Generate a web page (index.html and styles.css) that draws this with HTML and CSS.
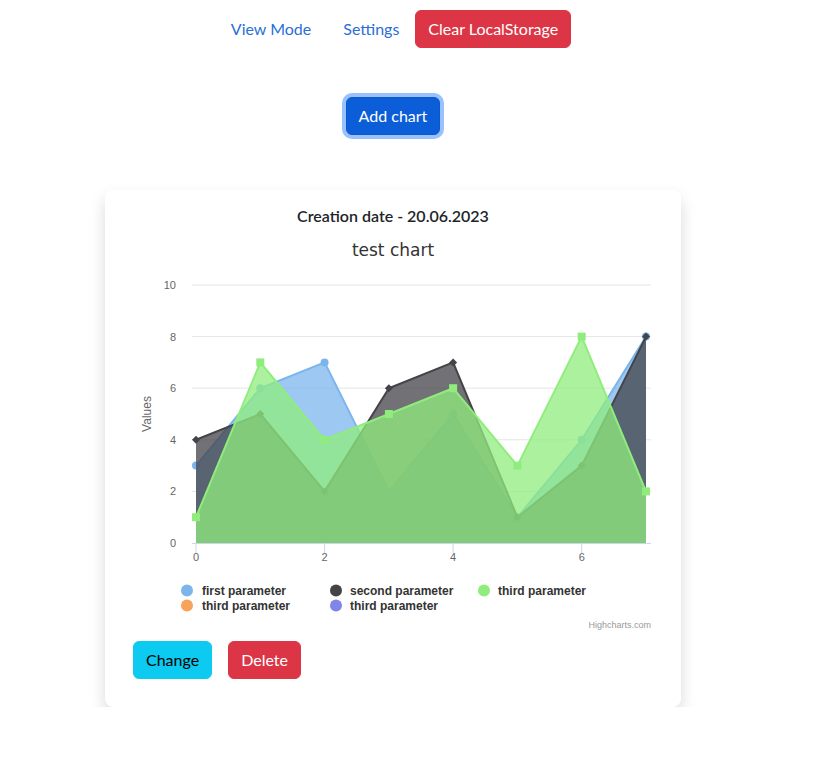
FILE: index.html
```html
<!DOCTYPE html>
<html lang="en">
<head>
    <meta charset="UTF-8">
    <meta name="viewport" content="width=device-width, initial-scale=1.0">
    <title>Charts</title>
    <link rel="stylesheet" href="styles.css">
</head>
<body>
    <div class="page">
        <nav class="top-nav">
            <a href="#" class="nav-link">View Mode</a>
            <a href="#" class="nav-link">Settings</a>
            <button class="btn btn-danger">Clear LocalStorage</button>
        </nav>

        <div class="add-row">
            <button class="btn btn-primary is-focused">Add chart</button>
        </div>

        <div class="chart-card">
            <h5 class="card-title">Creation date - 20.06.2023</h5>

            <svg class="chart" width="536" height="400" viewBox="125 230 536 400">
                <text class="chart-title" x="393" y="256">test chart</text>

                <!-- grid -->
                <g class="grid">
                    <line x1="192" y1="285" x2="651" y2="285"/>
                    <line x1="192" y1="336.6" x2="651" y2="336.6"/>
                    <line x1="192" y1="388.2" x2="651" y2="388.2"/>
                    <line x1="192" y1="439.8" x2="651" y2="439.8"/>
                    <line x1="192" y1="491.4" x2="651" y2="491.4"/>
                </g>
                <g class="y-labels">
                    <text x="176" y="289">10</text>
                    <text x="176" y="340.6">8</text>
                    <text x="176" y="392.2">6</text>
                    <text x="176" y="443.8">4</text>
                    <text x="176" y="495.4">2</text>
                    <text x="176" y="547">0</text>
                </g>
                <text class="axis-title" transform="translate(151 414) rotate(-90)">Values</text>

                <!-- first parameter -->
                <g class="series">
                    <polygon fill="#7cb5ec" points="196,543 196,465.6 260.3,388.2 324.6,362.4 388.9,491.4 453.1,414 517.4,517.2 581.7,439.8 646,336.6 646,543"/>
                    <polyline stroke="#7cb5ec" points="196,465.6 260.3,388.2 324.6,362.4 388.9,491.4 453.1,414 517.4,517.2 581.7,439.8 646,336.6"/>
                    <g fill="#7cb5ec">
                        <circle cx="196" cy="465.6" r="4"/>
                        <circle cx="260.3" cy="388.2" r="4"/>
                        <circle cx="324.6" cy="362.4" r="4"/>
                        <circle cx="388.9" cy="491.4" r="4"/>
                        <circle cx="453.1" cy="414" r="4"/>
                        <circle cx="517.4" cy="517.2" r="4"/>
                        <circle cx="581.7" cy="439.8" r="4"/>
                        <circle cx="646" cy="336.6" r="4"/>
                    </g>
                </g>

                <!-- second parameter -->
                <g class="series">
                    <polygon fill="#434348" points="196,543 196,439.8 260.3,414 324.6,491.4 388.9,388.2 453.1,362.4 517.4,517.2 581.7,465.6 646,336.6 646,543"/>
                    <polyline stroke="#434348" points="196,439.8 260.3,414 324.6,491.4 388.9,388.2 453.1,362.4 517.4,517.2 581.7,465.6 646,336.6"/>
                    <g fill="#434348">
                        <polygon points="196,435.8 200,439.8 196,443.8 192,439.8"/>
                        <polygon points="260.3,410 264.3,414 260.3,418 256.3,414"/>
                        <polygon points="324.6,487.4 328.6,491.4 324.6,495.4 320.6,491.4"/>
                        <polygon points="388.9,384.2 392.9,388.2 388.9,392.2 384.9,388.2"/>
                        <polygon points="453.1,358.4 457.1,362.4 453.1,366.4 449.1,362.4"/>
                        <polygon points="517.4,513.2 521.4,517.2 517.4,521.2 513.4,517.2"/>
                        <polygon points="581.7,461.6 585.7,465.6 581.7,469.6 577.7,465.6"/>
                        <polygon points="646,332.6 650,336.6 646,340.6 642,336.6"/>
                    </g>
                </g>

                <!-- third parameter -->
                <g class="series">
                    <polygon fill="#90ed7d" points="196,543 196,517.2 260.3,362.4 324.6,439.8 388.9,414 453.1,388.2 517.4,465.6 581.7,336.6 646,491.4 646,543"/>
                    <polyline stroke="#90ed7d" points="196,517.2 260.3,362.4 324.6,439.8 388.9,414 453.1,388.2 517.4,465.6 581.7,336.6 646,491.4"/>
                    <g fill="#90ed7d">
                        <rect x="192" y="513.2" width="8" height="8"/>
                        <rect x="256.3" y="358.4" width="8" height="8"/>
                        <rect x="320.6" y="435.8" width="8" height="8"/>
                        <rect x="384.9" y="410" width="8" height="8"/>
                        <rect x="449.1" y="384.2" width="8" height="8"/>
                        <rect x="513.4" y="461.6" width="8" height="8"/>
                        <rect x="577.7" y="332.6" width="8" height="8"/>
                        <rect x="642" y="487.4" width="8" height="8"/>
                    </g>
                </g>

                <!-- x axis -->
                <g class="x-axis">
                    <line x1="192" y1="543.5" x2="651" y2="543.5"/>
                    <line x1="196" y1="543" x2="196" y2="553"/>
                    <line x1="324.6" y1="543" x2="324.6" y2="553"/>
                    <line x1="453.1" y1="543" x2="453.1" y2="553"/>
                    <line x1="581.7" y1="543" x2="581.7" y2="553"/>
                </g>
                <g class="x-labels">
                    <text x="196" y="561">0</text>
                    <text x="324.6" y="561">2</text>
                    <text x="453.1" y="561">4</text>
                    <text x="581.7" y="561">6</text>
                </g>

                <!-- legend -->
                <g class="legend">
                    <circle cx="187" cy="590.5" r="6" fill="#7cb5ec"/>
                    <text x="202" y="595">first parameter</text>
                    <circle cx="336" cy="590.5" r="6" fill="#434348"/>
                    <text x="350" y="595">second parameter</text>
                    <circle cx="484" cy="590.5" r="6" fill="#90ed7d"/>
                    <text x="498" y="595">third parameter</text>
                    <circle cx="187" cy="605.5" r="6" fill="#f7a35c"/>
                    <text x="202" y="610">third parameter</text>
                    <circle cx="336" cy="605.5" r="6" fill="#8085e9"/>
                    <text x="350" y="610">third parameter</text>
                </g>

                <text class="credits" x="651" y="628">Highcharts.com</text>
            </svg>

            <div class="card-actions">
                <button class="btn btn-info">Change</button>
                <button class="btn btn-danger">Delete</button>
            </div>
        </div>
    </div>
</body>
</html>
```

FILE: styles.css
```css
body {
    margin: 0;
    font-family: Lato, 'Liberation Sans', sans-serif;
    font-size: 16px;
    line-height: 1.5;
    color: #212529;
    background-color: #fff;
}

.page {
    width: 786px;
    display: flex;
    flex-direction: column;
    align-items: center;
}

.top-nav {
    display: flex;
    align-items: center;
    margin-top: 9px;
}

.nav-link {
    padding: 8px 16px;
    color: #2a6fd6;
    text-decoration: none;
}

.btn {
    font-family: inherit;
    font-size: 16px;
    line-height: 24px;
    padding: 6px 12px;
    border: 1px solid transparent;
    border-radius: 6px;
    cursor: pointer;
}

.btn-danger {
    background: #dc3545;
    border-color: #dc3545;
    color: #fff;
}

.btn-primary {
    background: #0b5ed7;
    border-color: #0a58ca;
    color: #fff;
}

.btn-info {
    background: #0dcaf0;
    border-color: #0dcaf0;
    color: #000;
}

.is-focused {
    box-shadow: 0 0 0 4px rgba(49, 132, 253, 0.5);
}

.add-row {
    margin-top: 48px;
}

.chart-card {
    width: 576px;
    box-sizing: border-box;
    margin-top: 55px;
    padding: 14px 20px 28px;
    background: #fff;
    border-radius: 8px;
    box-shadow: 0 8px 16px rgba(0, 0, 0, 0.15);
}

.card-title {
    margin: 0;
    font-size: 16px;
    font-weight: 600;
    line-height: 24px;
    text-align: center;
}

.chart {
    display: block;
    margin-top: 2px;
}

.chart-title {
    font-family: 'DejaVu Sans', sans-serif;
    font-size: 17px;
    fill: #333;
    text-anchor: middle;
}

.grid line {
    stroke: #e6e6e6;
    stroke-width: 1;
}

.y-labels text {
    font-family: 'Liberation Sans', sans-serif;
    font-size: 11px;
    fill: #666;
    text-anchor: end;
}

.axis-title {
    font-family: 'Liberation Sans', sans-serif;
    font-size: 12px;
    fill: #666;
    text-anchor: middle;
}

.series polygon {
    fill-opacity: 0.75;
}

.series polyline {
    fill: none;
    stroke-width: 2;
    stroke-linejoin: round;
}

.series g polygon {
    fill-opacity: 1;
}

.x-axis line {
    stroke: #ccd6eb;
    stroke-width: 1;
}

.x-labels text {
    font-family: 'Liberation Sans', sans-serif;
    font-size: 11px;
    fill: #666;
    text-anchor: middle;
}

.legend text {
    font-family: 'Liberation Sans', sans-serif;
    font-size: 12px;
    font-weight: bold;
    fill: #333;
}

.credits {
    font-family: 'Liberation Sans', sans-serif;
    font-size: 9px;
    fill: #999;
    text-anchor: end;
}

.card-actions {
    display: flex;
    gap: 16px;
    margin: 11px 0 0 8px;
}
```
